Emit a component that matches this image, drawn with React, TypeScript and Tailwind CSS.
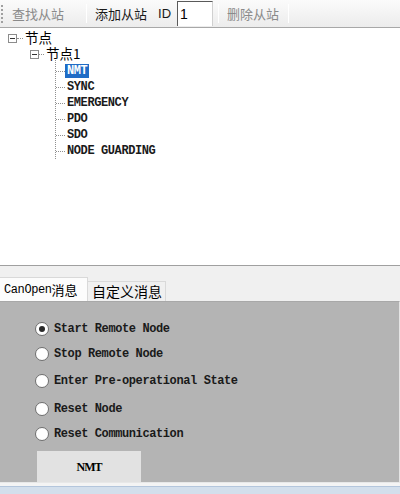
import React from "react";

const mono = { fontFamily: '"Liberation Mono", "Courier New", monospace' };
const cjk = { fontFamily: '"Noto Sans CJK SC", "Liberation Sans", sans-serif' };

const items = ["NMT", "SYNC", "EMERGENCY", "PDO", "SDO", "NODE GUARDING"];

const radios = [
  { label: "Start Remote Node", checked: true, mt: "mt-[19px]" },
  { label: "Stop Remote Node", checked: false, mt: "mt-[9px]" },
  { label: "Enter Pre-operational State", checked: false, mt: "mt-[11px]" },
  { label: "Reset Node", checked: false, mt: "mt-[12px]" },
  { label: "Reset Communication", checked: false, mt: "mt-[9px]" },
];

const MinusBox = () => (
  <span className="w-[9px] h-[9px] border border-[#8c8c8c] bg-white flex items-center justify-center shrink-0">
    <span className="w-[5px] h-px bg-[#333]" />
  </span>
);

const Sep = () => <span className="w-px h-[20px] bg-[#c8c8c8] border-r border-white" />;

const App = () => {
  return (
    <div className="w-[400px] h-[494px] overflow-hidden bg-[#f0f0f0] flex flex-col" style={cjk}>
      {/* toolbar */}
      <div className="h-[28px] flex items-center bg-gradient-to-b from-[#fbfbfb] to-[#ececec] border-b border-[#a8a8a8] text-[13px] shrink-0">
        <span className="w-[3px] h-[18px] ml-px border-l-2 border-dotted border-[#a0a0a0]" />
        <span className="ml-[8px] text-[#8a8a8a]">查找从站</span>
        <span className="ml-[22px]"><Sep /></span>
        <span className="ml-[8px] text-[#1a1a1a]">添加从站</span>
        <span className="ml-[11px] text-[#1a1a1a]" style={{ fontFamily: '"Liberation Sans", sans-serif' }}>ID</span>
        <span className="ml-[6px] w-[36px] h-[25px] bg-white border-l border-t border-[#5a5a5a] border-r border-r-[#d0d0d0] flex items-center pl-[2px] text-[14px] text-black" style={{ fontFamily: '"Liberation Sans", sans-serif' }}>1</span>
        <span className="ml-[5px]"><Sep /></span>
        <span className="ml-[8px] text-[#8a8a8a]">删除从站</span>
        <span className="ml-[9px]"><Sep /></span>
      </div>

      {/* tree */}
      <div className="h-[238px] bg-white border-b border-[#a0a0a0] pt-[2px] shrink-0 text-[13.5px] text-black">
        <div className="flex items-center h-[16px] pl-[8px]">
          <MinusBox />
          <span className="w-[6px] border-t border-dotted border-[#909090]" />
          <span className="ml-[2px] leading-none">节点</span>
        </div>
        <div className="flex items-center h-[16px] pl-[30px]">
          <MinusBox />
          <span className="w-[5px] border-t border-dotted border-[#909090]" />
          <span className="ml-[2px] leading-none">节点1</span>
        </div>
        <div className="ml-[55px] mt-[-4px] pt-[5px] w-fit border-l border-dotted border-[#909090]" style={mono}>
          {items.map((it, i) => (
            <div key={it} className={`flex items-center h-[16px] ${i === items.length - 1 ? "-mb-[8px]" : ""}`}>
              <span className="w-[9px] border-t border-dotted border-[#909090]" />
              <span
                className={`text-[12px] font-bold leading-[14px] tracking-[-0.4px] px-[2px] ${i === 0 ? "bg-[#1f6cc6] text-white" : "text-[#1a1a1a]"}`}
              >
                {it}
              </span>
            </div>
          ))}
        </div>
      </div>

      {/* tabs */}
      <div className="flex items-end mt-[11px] h-[24px] shrink-0">
        <div className="w-[88px] h-[24px] bg-[#fcfcfc] border-t border-r border-[#d9d9d9] flex items-center pl-[4px] text-[13px] text-black">
          <span className="text-[12px] tracking-[-0.4px]" style={mono}>CanOpen</span>
          <span>消息</span>
        </div>
        <div className="w-[78px] h-[20px] bg-[#f0f0f0] border-t border-r border-[#d9d9d9] flex items-center pl-[4px] text-[14px] text-black">
          自定义消息
        </div>
      </div>

      {/* panel */}
      <div className="h-[181px] bg-[#b4b4b4] border-t border-[#a8a8a8] border-r border-r-[#e4e4e4] flex flex-col pl-[35px] shrink-0" style={mono}>
        {radios.map((r) => (
          <div key={r.label} className={`flex items-center h-[16px] ${r.mt}`}>
            <span className="w-[14px] h-[14px] rounded-full bg-white border border-[#6e6e6e] flex items-center justify-center">
              {r.checked && <span className="w-[6px] h-[6px] rounded-full bg-[#2a2a2a]" />}
            </span>
            <span className="ml-[5px] text-[12px] font-bold tracking-[-0.4px] text-[#1a1a1a]">{r.label}</span>
          </div>
        ))}
        <div className="mt-[9px] ml-[2px] w-[104px] h-[34px] bg-[#e2e2e2] flex items-center justify-center">
          <span className="text-[12px] font-bold text-black tracking-[-1px]" style={{ fontFamily: '"Liberation Serif", serif' }}>NMT</span>
        </div>
      </div>
      <div className="h-[4px] bg-[#f4f4f4] border-t border-[#e8e8e8] shrink-0" />
      <div className="flex-1 bg-[#d3dfec] border-t border-[#b4c6dc]" />
    </div>
  );
};

export default App;
